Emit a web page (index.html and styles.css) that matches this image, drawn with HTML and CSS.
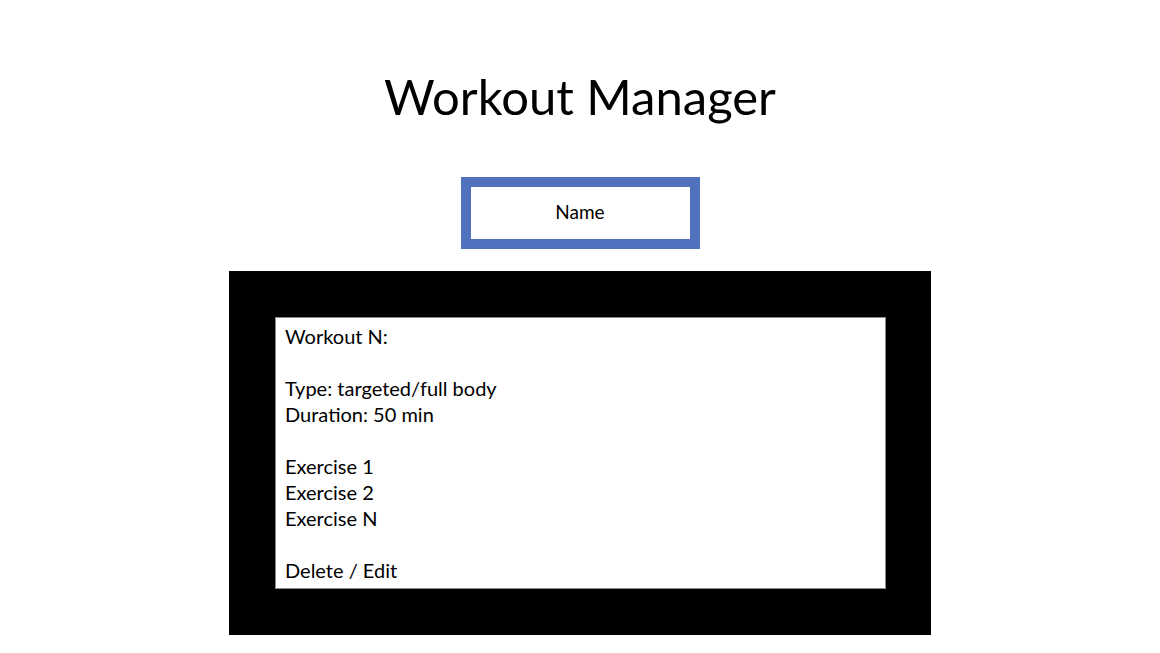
FILE: index.html
```html
<!DOCTYPE html>
<html>
<head>
<meta charset="utf-8">
<link rel="stylesheet" href="styles.css">
</head>
<body>
<main class="page">
  <h1 class="title">Workout Manager</h1>
  <div class="name-box"><span>Name</span></div>
  <section class="card">
    <div class="card-inner">
      <p class="line">Workout N:</p>
      <p class="line blank"></p>
      <p class="line">Type: targeted/full body</p>
      <p class="line">Duration: 50 min</p>
      <p class="line blank"></p>
      <p class="line">Exercise 1</p>
      <p class="line">Exercise 2</p>
      <p class="line">Exercise N</p>
      <p class="line blank"></p>
      <p class="line">Delete / Edit</p>
    </div>
  </section>
</main>
</body>
</html>
```
FILE: styles.css
```css
html, body {
  margin: 0;
  padding: 0;
  background: #ffffff;
}
body {
  width: 1160px;
  height: 653px;
  overflow: hidden;
  font-family: "Lato", "Open Sans", "Liberation Sans", sans-serif;
  color: #000;
}
.page {
  display: flex;
  flex-direction: column;
  align-items: center;
}
.title {
  margin: 66px 0 0 0;
  height: 60px;
  line-height: 60px;
  font-size: 49px;
  font-weight: 400;
  letter-spacing: 0;
}
.name-box {
  margin-top: 51px;
  box-sizing: border-box;
  width: 239px;
  height: 72px;
  border: 10px solid #4f71be;
  background: #fff;
  display: flex;
  align-items: center;
  justify-content: center;
  padding-bottom: 3px;
  font-size: 19px;
}
.card {
  margin-top: 22px;
  box-sizing: border-box;
  width: 702px;
  height: 364px;
  background: #000;
  padding: 46px 45px 46px 46px;
}
.card-inner {
  box-sizing: border-box;
  width: 611px;
  height: 272px;
  background: #fff;
  border: 1px solid #8a8a8a;
  padding: 5px 9px 0 9px;
}
.line {
  margin: 0;
  height: 26px;
  line-height: 26px;
  font-size: 20px;
}
```
